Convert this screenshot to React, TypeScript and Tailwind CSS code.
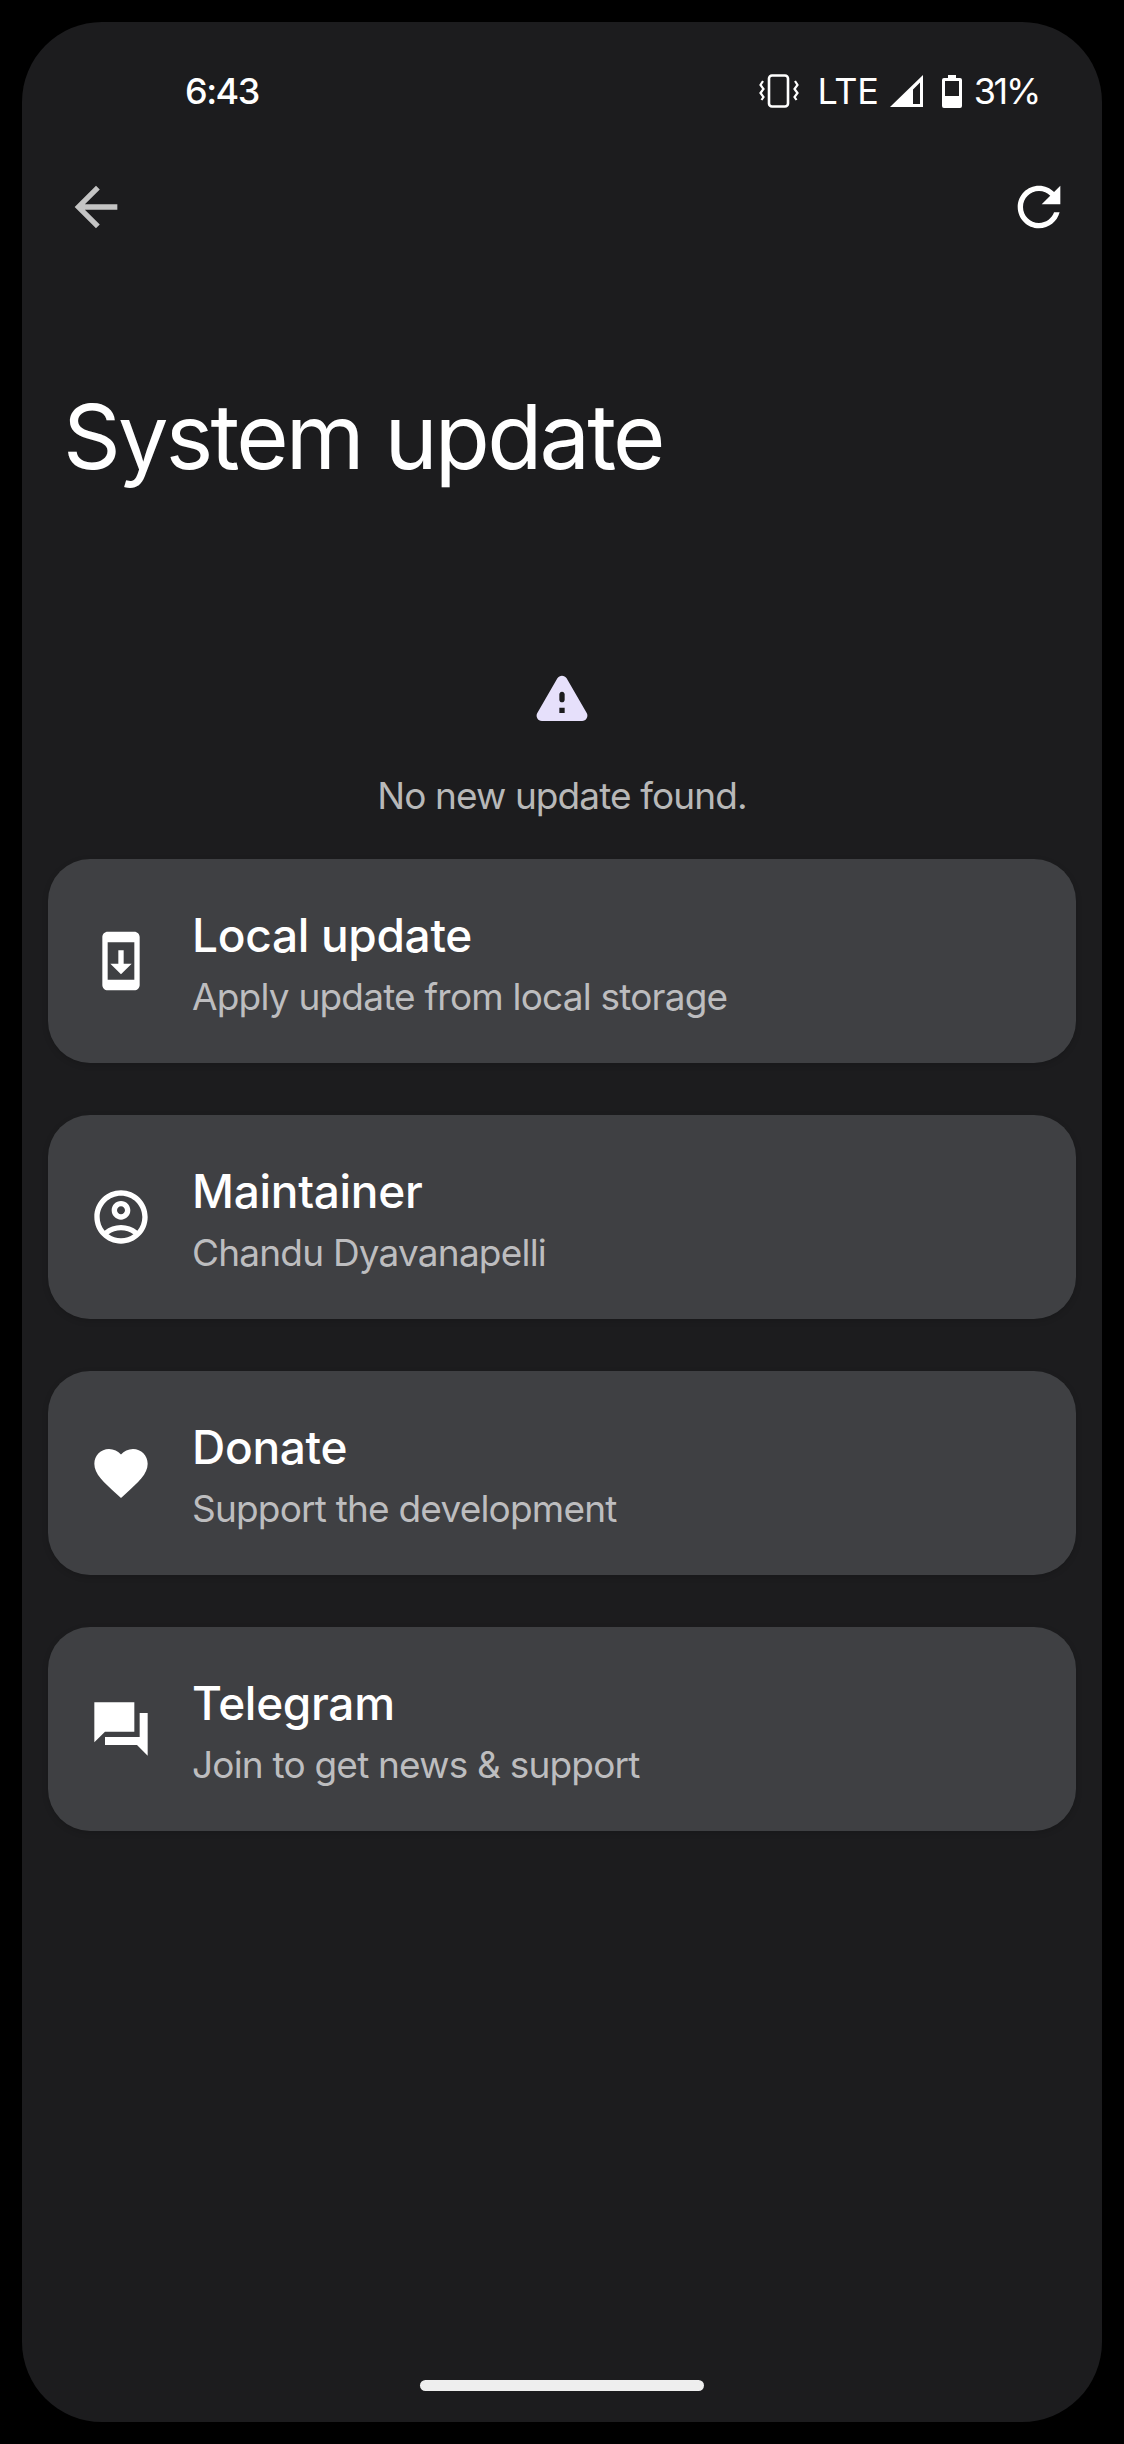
const font = { fontFamily: "Inter, sans-serif" };

const Icon = ({ d, className }: { d: string; className: string }) => (
  <svg viewBox="0 0 24 24" fill="currentColor" className={className}>
    <path d={d} />
  </svg>
);

const icons = {
  back: "M20 11H7.83l5.59-5.59L12 4l-8 8 8 8 1.41-1.41L7.83 13H20v-2z",
  refresh:
    "M17.65 6.35C16.2 4.9 14.21 4 12 4c-4.42 0-7.99 3.58-7.99 8s3.57 8 7.99 8c3.73 0 6.84-2.55 7.73-6h-2.08c-.82 2.33-3.04 4-5.65 4-3.31 0-6-2.69-6-6s2.69-6 6-6c1.66 0 3.14.69 4.22 1.78L13 11h7V4l-2.35 2.35z",
  warning:
    "M4.47 21h15.06c1.54 0 2.5-1.67 1.73-3L13.73 4.99c-.77-1.33-2.69-1.33-3.46 0L2.74 18c-.77 1.33.19 3 1.73 3zM12 14c-.55 0-1-.45-1-1v-2c0-.55.45-1 1-1s1 .45 1 1v2c0 .55-.45 1-1 1zm1 4h-2v-2h2v2z",
  phone:
    "M17 1.01L7 1c-1.1 0-2 .9-2 2v18c0 1.1.9 2 2 2h10c1.1 0 2-.9 2-2V3c0-1.1-.9-1.99-2-1.99zM17 19H7V5h10v14zm-1-6h-3V8h-2v5H8l4 4 4-4z",
  person:
    "M12 2C6.48 2 2 6.48 2 12s4.48 10 10 10 10-4.48 10-10S17.52 2 12 2zM7.35 18.5C8.66 17.56 10.26 17 12 17s3.34.56 4.65 1.5C15.34 19.44 13.74 20 12 20s-3.34-.56-4.65-1.5zm10.79-1.38C16.45 15.8 14.32 15 12 15s-4.45.8-6.14 2.12C4.7 15.73 4 13.95 4 12c0-4.42 3.58-8 8-8s8 3.58 8 8c0 1.95-.7 3.73-1.86 5.12zM12 6c-1.93 0-3.5 1.57-3.5 3.5S10.07 13 12 13s3.5-1.57 3.5-3.5S13.93 6 12 6zm0 5c-.83 0-1.5-.67-1.5-1.5S11.17 8 12 8s1.5.67 1.5 1.5S12.83 11 12 11z",
  heart:
    "M12 21.35l-1.45-1.32C5.4 15.36 2 12.28 2 8.5 2 5.42 4.42 3 7.5 3c1.74 0 3.41.81 4.5 2.09C13.09 3.81 14.76 3 16.5 3 19.58 3 22 5.42 22 8.5c0 3.78-3.4 6.86-8.55 11.54L12 21.35z",
  forum: "M22 6h-3v9H6v3h12l4 4V6zm-5 7V2H2v15l4-4h11z",
};

const rows = [
  { icon: icons.phone, title: "Local update", sub: "Apply update from local storage" },
  { icon: icons.person, title: "Maintainer", sub: "Chandu Dyavanapelli" },
  { icon: icons.heart, title: "Donate", sub: "Support the development" },
  { icon: icons.forum, title: "Telegram", sub: "Join to get news & support" },
];

const StatusIcons = () => (
  <div className="flex items-center text-white">
    {/* vibrate */}
    <svg viewBox="0 0 40 34" className="w-10 h-[34px]" fill="none" stroke="currentColor" strokeWidth="2.6">
      <rect x="10" y="1.5" width="19" height="31" rx="3" />
      <path d="M4 7 L1.5 11 L4.5 15 L1.5 19 L4.5 23 L2.5 26" strokeWidth="2.2" />
      <path d="M36 7 L38.5 11 L35.5 15 L38.5 19 L35.5 23 L37.5 26" strokeWidth="2.2" />
    </svg>
    <span className="ml-[18px] text-[36px] leading-none tracking-[-0.2px]">LTE</span>
    {/* signal */}
    <svg viewBox="0 0 33 32" className="ml-[11px] w-[33px] h-8" fill="currentColor">
      <path d="M33 0V32H0ZM30 7.5 L23 14.5V29H30Z" />
    </svg>
    {/* battery */}
    <svg viewBox="0 0 20 33" className="ml-[19px] w-5 h-[33px]" fill="currentColor">
      <path d="M6 0h8v3h4a2 2 0 0 1 2 2v26a2 2 0 0 1-2 2H2a2 2 0 0 1-2-2V5a2 2 0 0 1 2-2h4ZM3 6V21H17V6Z" />
    </svg>
    <span className="ml-3 text-[36px] leading-none tracking-[-2.3px]">31%</span>
  </div>
);

const Row = ({ icon, title, sub }: { icon: string; title: string; sub: string }) => (
  <div className="flex h-[204px] items-center rounded-[42px] bg-[#3f4043] pl-[41px] shadow-[0_2px_6px_rgba(0,0,0,0.15)]">
    <Icon d={icon} className="h-16 w-16 text-white" />
    <div className="ml-[39px] flex flex-col pt-[3px]">
      <div className="text-[46px] leading-[62px] font-medium tracking-[-0.3px] text-white">{title}</div>
      <div className="mt-[6px] text-[37px] leading-[50px] tracking-[-0.8px] text-[#bdbdbf]">{sub}</div>
    </div>
  </div>
);

export default function App() {
  return (
    <div className="h-[2444px] w-[1124px] bg-black p-[22px]" style={font}>
      <div className="flex h-[2400px] w-[1080px] flex-col rounded-[80px] bg-[#1c1c1e]">
        {/* status bar */}
        <div className="flex h-[138px] items-center justify-between pl-[163px] pr-[63px]">
          <span className="text-[36px] leading-none font-medium tracking-[-1.5px] text-white">6:43</span>
          <StatusIcons />
        </div>

        {/* toolbar */}
        <div className="mt-[15px] flex items-center justify-between pl-[42px] pr-[31px]">
          <Icon d={icons.back} className="h-16 w-16 text-[#c4c4c4]" />
          <Icon d={icons.refresh} className="h-16 w-16 text-white" />
        </div>

        <h1 className="mt-[143px] pl-[41px] text-[90px] leading-[110px] font-normal tracking-[-2.8px] text-white">System update</h1>

        <div className="mt-[173px] flex flex-col items-center">
          <Icon d={icons.warning} className="h-16 w-16 text-[#e6e0fb]" />
          <p className="mt-[42px] text-[37px] leading-[50px] tracking-[-0.9px] text-[#b8b8b8]">No new update found.</p>
        </div>

        <div className="mt-[38px] flex flex-col gap-[52px] px-[26px]">
          {rows.map((r) => (
            <Row key={r.title} icon={r.icon} title={r.title} sub={r.sub} />
          ))}
        </div>

        {/* gesture bar */}
        <div className="mt-auto mb-[31px] flex justify-center">
          <div className="h-[11px] w-[284px] rounded-full bg-[#eeeeee]" />
        </div>
      </div>
    </div>
  );
}
